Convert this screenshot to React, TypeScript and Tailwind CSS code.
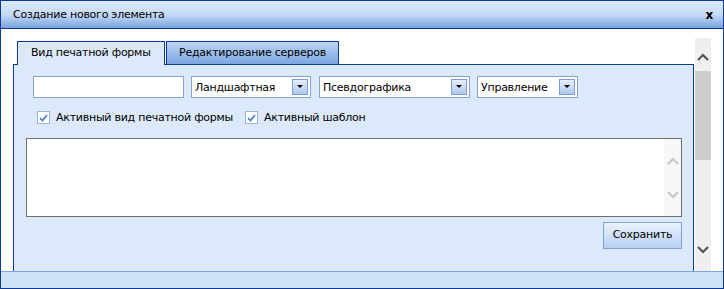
import React from "react";

const font = { fontFamily: '"DejaVu Sans", Verdana, sans-serif', letterSpacing: "-0.25px" };

function Chevron({ dir, className }: { dir: "up" | "down"; className?: string }) {
  const d = dir === "up" ? "M1 7 L6 2 L11 7" : "M1 2 L6 7 L11 2";
  return (
    <svg width="12" height="9" viewBox="0 0 12 9" className={className}>
      <path d={d} fill="none" stroke="currentColor" strokeWidth="2.2" />
    </svg>
  );
}

function Select({ label, width }: { label: string; width: string }) {
  return (
    <div
      className={`${width} h-[22px] border border-[#86a4cf] bg-white flex items-center justify-between pl-[3px] pr-[2px]`}
    >
      <span className="text-[11px] text-black leading-none">{label}</span>
      <div className="w-[16px] h-[16px] border border-[#7b9fd4] bg-gradient-to-b from-[#e4eefb] to-[#adc9ef] flex items-center justify-center">
        <svg width="6" height="4" viewBox="0 0 6 4">
          <path d="M0 0 L6 0 L3 3 Z" fill="#000" />
        </svg>
      </div>
    </div>
  );
}

function Check({ label }: { label: string }) {
  return (
    <label className="flex items-center gap-[6px]">
      <span className="w-[13px] h-[13px] border border-[#9bb5d8] bg-white flex items-center justify-center">
        <svg width="9" height="8" viewBox="0 0 9 8">
          <path d="M1 4 L3.5 6.5 L8 1" fill="none" stroke="#3b78cc" strokeWidth="1.6" />
        </svg>
      </span>
      <span className="text-[11px] text-black leading-none">{label}</span>
    </label>
  );
}

export default function App() {
  return (
    <div
      style={font}
      className="w-[724px] h-[289px] border border-[#0b3a9c] flex flex-col bg-white overflow-hidden"
    >
      {/* title bar */}
      <div className="h-[28px] shrink-0 border-b border-[#0b3a9c] bg-gradient-to-b from-[#dde9fa] via-[#c6daf5] to-[#79a3df] flex items-center justify-between pl-[12px] pr-[10px]">
        <span className="text-[11px] text-black pt-px">Создание нового элемента</span>
        <span className="text-[12px] font-bold text-black leading-none">x</span>
      </div>

      {/* body */}
      <div className="flex-1 flex min-h-0">
        <div className="w-[693px] pl-[12px] pt-[12px] flex flex-col">
          {/* tabs */}
          <div className="flex items-end h-[23px] pl-[4px] gap-[1px]">
            <div className="h-[24px] -mb-px relative z-10 w-[148px] border border-b-0 border-[#0b3a9c] bg-[#dce9fb] flex items-center pl-[13px] text-[11px] text-black">
              Вид печатной формы
            </div>
            <div className="h-[23px] w-[173px] border border-b-0 border-[#0b3a9c] bg-gradient-to-b from-[#bcd4f4] to-[#7ca6e1] flex items-center pl-[12px] text-[11px] text-black">
              Редактирование серверов
            </div>
          </div>

          {/* panel */}
          <div className="flex-1 border border-b-0 border-[#0b3a9c] bg-[#dce9fb] pl-[12px] pr-[11px] pt-[11px] flex flex-col">
            <div className="flex items-center ml-[7px]">
              <div className="w-[151px] h-[22px] border border-[#86a4cf] bg-white" />
              <div className="ml-[7px]">
                <Select label="Ландшафтная" width="w-[120px]" />
              </div>
              <div className="ml-[8px]">
                <Select label="Псевдографика" width="w-[151px]" />
              </div>
              <div className="ml-[7px]">
                <Select label="Управление" width="w-[101px]" />
              </div>
            </div>

            <div className="flex items-center ml-[11px] mt-[13px] gap-[12px]">
              <Check label="Активный вид печатной формы" />
              <Check label="Активный шаблон" />
            </div>

            <div className="mt-[14px] h-[79px] border border-[#707070] bg-white flex justify-end">
              <div className="w-[17px] bg-[#f7f7f7] flex flex-col items-center justify-between pt-[18px] pb-[17px] text-[#c6c6c6]">
                <Chevron dir="up" />
                <Chevron dir="down" />
              </div>
            </div>

            <div className="flex justify-end mt-[5px]">
              <button className="w-[79px] h-[27px] border border-[#7fa3d8] bg-gradient-to-b from-[#eaf2fc] to-[#b7d0f1] text-[11px] text-black">
                Сохранить
              </button>
            </div>
          </div>
        </div>

        {/* main scrollbar */}
        <div className="w-[16px] ml-[1px] mt-[9px] bg-[#efefef] flex flex-col items-center text-[#555]">
          <div className="h-[33px] flex items-end pb-[9px]">
            <Chevron dir="up" />
          </div>
          <div className="w-[16px] h-[89px] bg-[#cdcdcd]" />
          <div className="flex-1 flex items-end pb-[17px]">
            <Chevron dir="down" />
          </div>
        </div>
        <div className="flex-1" />
      </div>

      {/* bottom bar */}
      <div className="h-[17px] shrink-0 border-t border-[#7ea6e0] bg-[#cfe1f6]" />
    </div>
  );
}
